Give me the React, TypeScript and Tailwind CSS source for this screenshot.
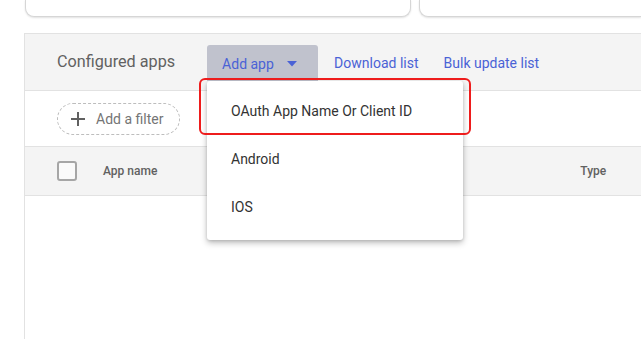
import React from "react";

export default function App() {
  return (
    <div
      className="relative w-[641px] h-[339px] overflow-hidden bg-white"
      style={{ fontFamily: "Roboto, 'Liberation Sans', sans-serif" }}
    >
      {/* top cards */}
      <div className="flex gap-[8px] pl-[25px]">
        <div className="w-[386px] h-[17px] bg-white border border-t-0 border-[#d6d6d6] rounded-b-[9px] shadow-[0_1px_2px_rgba(0,0,0,0.12)]" />
        <div className="flex-1 h-[17px] bg-white border border-t-0 border-r-0 border-[#d6d6d6] rounded-bl-[9px] shadow-[0_1px_2px_rgba(0,0,0,0.12)]" />
      </div>

      {/* panel */}
      <div className="ml-[24px] mt-[16px] border-l border-t border-[#e2e2e2] h-[400px]">
        {/* header */}
        <div className="h-[57px] bg-[#f4f4f4] border-b border-[#e2e2e2] flex items-start pl-[32px]">
          <span className="mt-[18px] text-[16.2px] text-[#616161] leading-[20px]">Configured apps</span>
          <div className="ml-[32px] mt-[11px] w-[111px] h-[36px] bg-[#c0c2cd] rounded-t-[3px] flex items-center pl-[15px] pt-[2px]">
            <span className="text-[14px] text-[#4a62d6] leading-[20px]">Add app</span>
            <svg className="ml-[13px]" width="10" height="6" viewBox="0 0 10 6">
              <path d="M0 0 L10 0 L5 5.5 Z" fill="#4a62d6" />
            </svg>
          </div>
          <span className="ml-[16px] mt-[19px] text-[14px] text-[#4a62d6] leading-[20px]">Download list</span>
          <span className="ml-[25px] mt-[19px] text-[14px] text-[#4a62d6] leading-[20px]">Bulk update list</span>
        </div>

        {/* filter row */}
        <div className="h-[56px] border-b border-[#e2e2e2] flex items-center pl-[32px]">
          <div className="w-[123px] h-[32px] rounded-full border border-dashed border-[#bdbdbd] flex items-center pl-[12px]">
            <svg width="16" height="16" viewBox="0 0 16 16">
              <path d="M8 1 V15 M1 8 H15" stroke="#616161" strokeWidth="2" />
            </svg>
            <span className="ml-[10px] text-[14px] text-[#757575] leading-[20px]">Add a filter</span>
          </div>
        </div>

        {/* table header */}
        <div className="h-[49px] bg-[#f4f4f4] border-b border-[#e2e2e2] flex items-center pl-[32px]">
          <div className="w-[20px] h-[20px] rounded-[3px] border-2 border-[#a6a6a6] bg-[#fafafa]" />
          <span className="ml-[26px] text-[12px] font-medium text-[#616161]">App name</span>
          <span className="ml-[423px] text-[12px] font-medium text-[#616161]">Type</span>
        </div>
      </div>

      {/* dropdown menu */}
      <div className="absolute left-[207px] top-[81px] w-[256px] h-[159px] bg-white rounded-[3px] shadow-[0_3px_6px_rgba(0,0,0,0.25),0_1px_3px_rgba(0,0,0,0.12)] pt-[6px]">
        <div className="h-[48px] flex items-center pl-[24px] text-[14px] text-[#333333]">OAuth App Name Or Client ID</div>
        <div className="h-[48px] flex items-center pl-[24px] text-[14px] text-[#333333]">Android</div>
        <div className="h-[48px] flex items-center pl-[24px] text-[14px] text-[#333333]">IOS</div>
      </div>

      {/* red highlight */}
      <div className="absolute left-[199px] top-[78px] w-[272px] h-[57px] border-2 border-[#ee1c1c] rounded-[6px]" />
    </div>
  );
}
